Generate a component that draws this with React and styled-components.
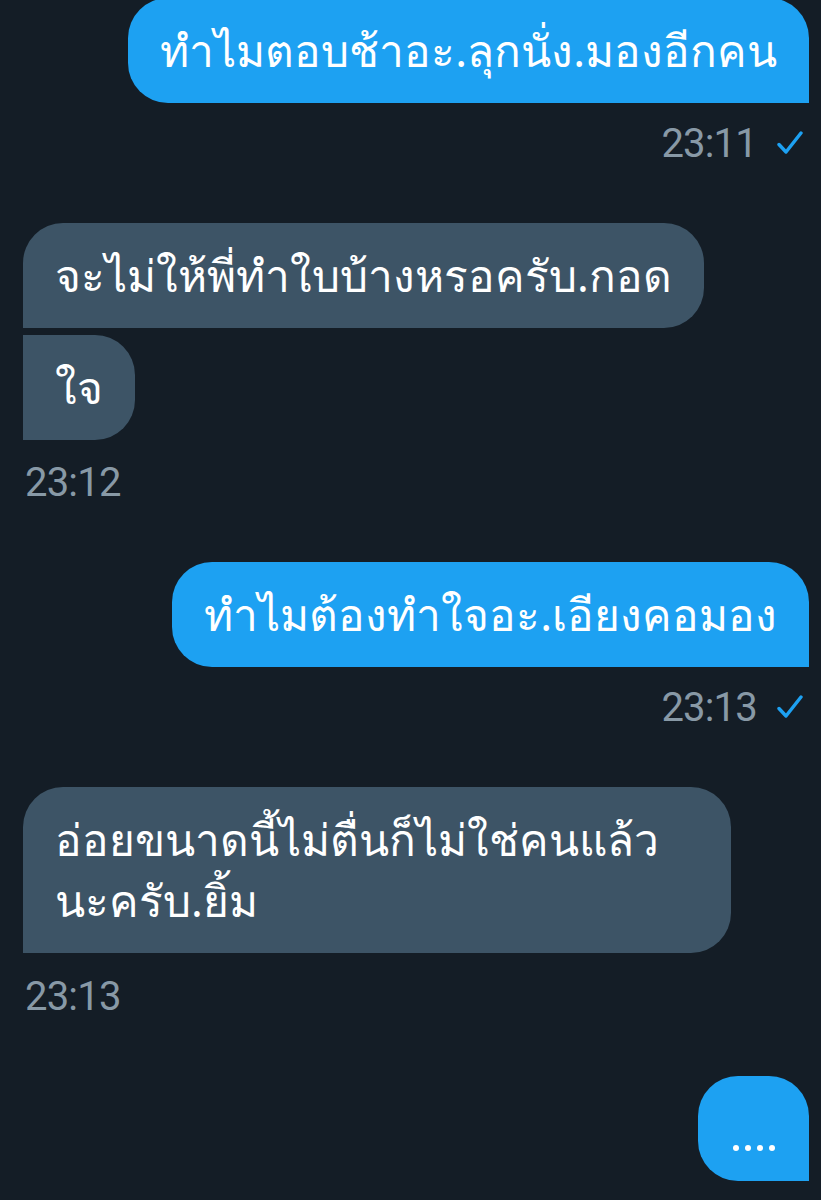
import React from 'react';
import styled, { createGlobalStyle } from 'styled-components';

const GlobalStyle = createGlobalStyle`
  html, body { margin: 0; padding: 0; background: #141d26; }
  body { font-family: "Noto Sans", "DejaVu Sans", sans-serif; }
`;

const Screen = styled.div`
  width: 821px; height: 1200px; overflow: hidden;
  background: #141d26;
  display: flex; flex-direction: column;
  padding: 0 12px 0 23px; box-sizing: border-box;
  margin-top: -2px;
`;

const Group = styled.div`
  display: flex; flex-direction: column;
  align-items: ${p => (p.$mine ? 'flex-end' : 'flex-start')};
  gap: 7px;
  margin-bottom: ${p => p.$gap ?? 55}px;
`;

const Bubble = styled.div`
  box-sizing: border-box;
  min-height: 105px;
  width: ${p => p.$width || 'auto'};
  padding: 22px 32px;
  font-size: 44.2px; line-height: 61px;
  color: #fff;
  background: ${p => (p.$mine ? '#1da1f2' : '#3d5466')};
  border-radius: ${p => p.$corners};
  white-space: nowrap;
`;

const Meta = styled.div`
  display: flex; align-items: center; gap: 20px;
  height: 50px; margin-top: ${p => p.$top ?? 8}px;
  font-family: Roboto, "Liberation Sans", sans-serif;
  font-size: 40px; color: #8899a6;
  letter-spacing: -0.8px;
  padding: ${p => (p.$mine ? '0 6px 0 0' : '0 0 0 2px')};
`;

const Typing = styled.div`
  width: 111px; height: 105px; box-sizing: border-box;
  background: #1da1f2;
  border-radius: 40px 40px 0 40px;
  display: flex; justify-content: center; align-items: flex-end;
  gap: 6px; padding-bottom: 30px;
`;

const Dot = styled.span`
  width: 6px; height: 6px; border-radius: 50%; background: #fff;
`;

const Check = () => (
  <svg width="26" height="24" viewBox="0 0 26 24" fill="none">
    <path d="M2 13.5 L9 21 L24 2" stroke="#1da1f2" strokeWidth="3.4" strokeLinecap="round" strokeLinejoin="round" />
  </svg>
);

const R = '40px';

export default function App() {
  return (
    <>
      <GlobalStyle />
      <Screen>
        <Group $mine>
          <Bubble $mine $corners={`${R} ${R} 0 ${R}`}>ทำไมตอบช้าอะ.ลุกนั่ง.มองอีกคน</Bubble>
          <Meta $mine $top={8}>23:11 <Check /></Meta>
        </Group>

        <Group>
          <Bubble $corners={`${R} ${R} ${R} 0`}>จะไม่ให้พี่ทำใบบ้างหรอครับ.กอด</Bubble>
          <Bubble $corners={`0 ${R} ${R} 0`}>ใจ</Bubble>
          <Meta $top={10}>23:12</Meta>
        </Group>

        <Group $mine>
          <Bubble $mine $corners={`${R} ${R} 0 ${R}`}>ทำไมต้องทำใจอะ.เอียงคอมอง</Bubble>
          <Meta $mine $top={8}>23:13 <Check /></Meta>
        </Group>

        <Group>
          <Bubble $corners={`${R} ${R} ${R} 0`} $width="708px">
            อ่อยขนาดนี้ไม่ตื่นก็ไม่ใช่คนแล้ว<br />นะครับ.ยิ้ม
          </Bubble>
          <Meta $top={11}>23:13</Meta>
        </Group>

        <Group $mine>
          <Typing>
            <Dot /><Dot /><Dot /><Dot />
          </Typing>
        </Group>
      </Screen>
    </>
  );
}
